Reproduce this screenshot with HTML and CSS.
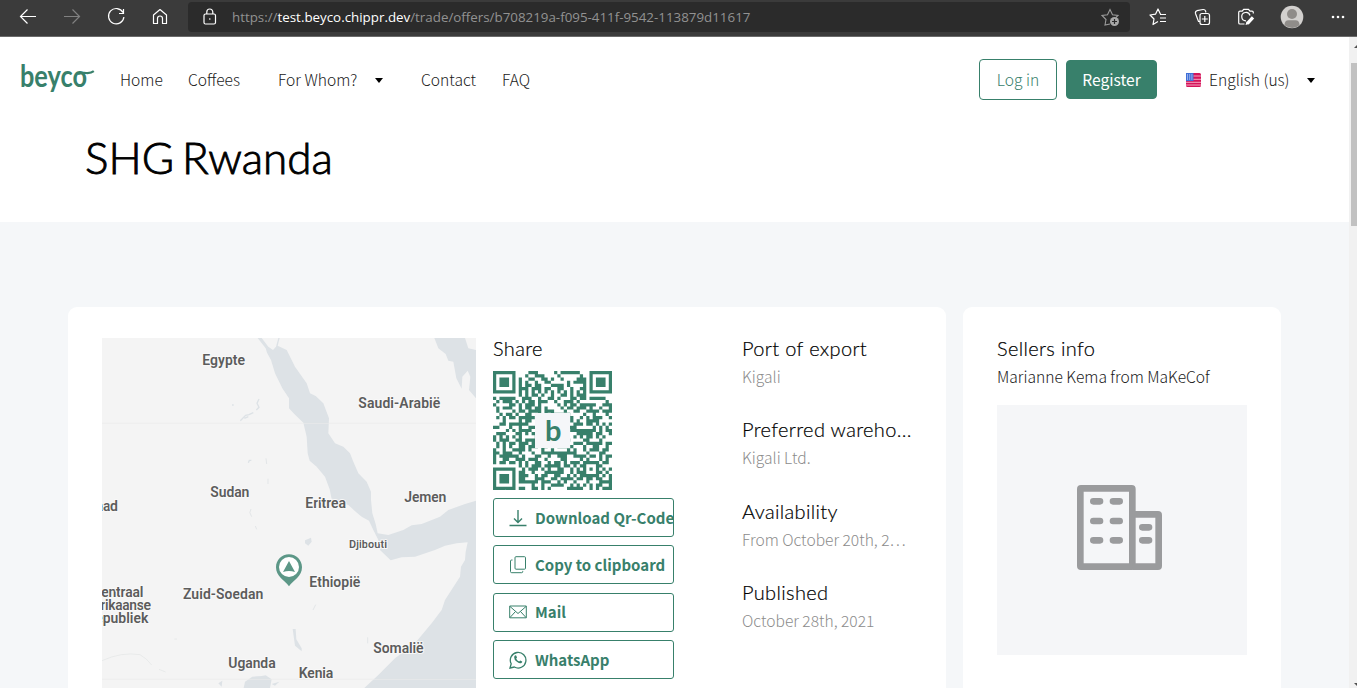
FILE: index.html
```html
<!DOCTYPE html>
<html lang="en">
<head>
<meta charset="utf-8">
<title>SHG Rwanda</title>
<link rel="stylesheet" href="styles.css">
</head>
<body>
<div class="browser">
  <svg class="nav-icons" width="188" height="36" viewBox="0 0 188 36" fill="none" stroke="#fff" stroke-width="1.2">
    <path d="M36 16.500H20.500M27.500 9.500l-7 7 7 7"/>
    <path d="M64 16.500h15.500M72.500 9.500l7 7-7 7" stroke="#818181"/>
    <path d="M123 12.500a7.700 7.700 0 1 0 .9 4.500M123.500 9v4.500H119"/>
    <path d="M153.500 15l6.500-5.500 6.500 5.500v8.500h-4v-5a2.500 2.500 0 0 0-5 0v5h-4z" stroke-linejoin="round"/>
  </svg>
  <div class="address">
    <svg width="14" height="18" viewBox="0 0 14 18" fill="none" stroke="#fff" stroke-width="1.2"><rect x="1" y="6" width="11.500" height="10" rx="1.500"/><path d="M3.800 6V4a3 3 0 0 1 6 0v2"/><circle cx="6.800" cy="11" r=".8" fill="#fff" stroke="none"/></svg>
    <span class="url">https://<b>test.beyco.chippr.dev</b>/trade/offers/b708219a-f095-411f-9542-113879d11617</span>
    <svg class="fav" width="20" height="20" viewBox="0 0 20 20"><path d="M9 17l-5 1 1-5.500-4-4 5.500-.8L9 2.500l2.500 5.200 5.500.8-2 2" fill="none" stroke="#9b9b9b" stroke-width="1.100"/><circle cx="13.500" cy="14.500" r="4.500" fill="#a8a8a8"/><path d="M11 14.500h5M13.500 12v5" stroke="#2b2b2b" stroke-width="1.200"/></svg>
  </div>
  <svg class="tools" width="227" height="36" viewBox="1130 0 227 36" fill="none" stroke="#fff" stroke-width="1.200">
    <path d="M1158 21.500l-5 3 1-5.500-4-4 5.500-.8 2.500-5.200 2.500 5.200M1160 14.500h6M1160 18h6M1160 21.500h6" stroke-linejoin="round"/>
    <path d="M1200 21.500h-1.500l-3-8q-.5-2 1.500-2.800l6-1.200q2-.2 2.700 1.700v1.300"/><rect x="1200" y="13.500" width="9.500" height="11" rx="2"/><path d="M1204.800 16v6M1201.800 19h6"/>
    <path d="M1244.500 24h-4.500q-1.300 0-1.300-1.300V12.500q0-1.300 1.300-1.300h2.200l1.500-1.900h4.800l1.500 1.900h2q1.300 0 1.300 1.300v1M1246 20.800a4.200 4.200 0 1 1 4-5.300"/><path d="M1247.500 23.300l5.500-6" stroke-width="3.200"/><path d="M1245.500 25l1-3.500 2.500 2.500z" fill="#fff" stroke="none"/>
    <g stroke="none"><circle cx="1292" cy="17" r="11.300" fill="#d2d0ce"/><circle cx="1292" cy="14" r="5" fill="#8f8c89"/><path d="M1284.500 25.300q0-5 4-5h7q4 0 4 5-7 5.500-15 0z" fill="#8f8c89"/><g fill="#fff"><circle cx="1333" cy="17" r="1.300"/><circle cx="1338" cy="17" r="1.300"/><circle cx="1343" cy="17" r="1.300"/></g></g>
  </svg>
</div>
<div class="viewport">
  <main class="page">
    <header class="top">
      <nav class="menu">
        <svg class="logo" width="78" height="44" viewBox="0 0 78 44"><text x="0" y="29" textLength="67" lengthAdjust="spacingAndGlyphs">beyco</text><path d="M58 16q4-1.500 8-1 5 .4 7.800-1.800" fill="none" stroke="#38806b" stroke-width="2.200"/></svg>
        <a class="home">Home</a><a class="coffees">Coffees</a><a class="whom">For Whom?</a><i class="caret"></i><a class="contact">Contact</a><a class="faq">FAQ</a>
        <span class="btn login"><span>Log in</span></span><span class="btn register"><span>Register</span></span>
        <svg class="flag" width="15" height="14" viewBox="0 0 15 14"><rect width="15" height="14" rx="1.500" fill="#d4145a"/><path d="M0 3h15M0 6.300h15M0 9.300h15M0 12h15" stroke="#f5a6c0" stroke-width="1"/><rect width="7.500" height="8" fill="#3f6fd8"/><path d="M1 2h6M1 4h6M1 6h6" stroke="#fff" stroke-width=".9" stroke-dasharray="1 1.200"/></svg>
        <a class="lang">English (us)</a><i class="caret"></i>
      </nav>
      <h1>SHG Rwanda</h1>
    </header>
    <div class="cards">
      <section class="card offer">
        <svg class="map" width="374" height="350" viewBox="21 24 1122 1050">
          <rect x="21" y="24" width="1122" height="1050" fill="#f4f4f4"/>
          <g fill="#dde2e6">
            <path d="M488 24L512 55 516 68 528 90 540 130 562 175 582 205 582 235 598 252 625 278 635 320 638 370 644 392 665 410 690 440 704 478 710 508 760 525 782 545 800 560 822 572 835 600 850 630 855 660 887 691 920 682 960 680 1020 660 1050 647 1085 640 1118 637 1112 665 1110 690 1098 710 1095 740 1050 810 1040 840 1010 880 960 940 900 985 850 1035 808 1074H1143V512L1110 522 1060 540 1035 560 980 582 950 586 925 600 880 615 848 610 842 582 832 550 828 510 828 485 815 455 790 430 775 395 765 370 745 350 720 340 700 310 702 265 685 220 662 198 645 190 635 160 600 110 575 60 548 47 554 24H550L543 50 534 60 520 50 500 24Z"/>
            <path d="M1018 24L1030 55 1052 72 1060 92 1075 95 1084 145 1100 176 1102 140 1118 122 1126 140 1122 180 1143 205V60L1120 55 1110 24Z"/>
            <path d="M446 1074L450 1055 472 1040 500 1038 512 1036 530 1048 525 1074ZM593 897H602L604 928 620 955V964L600 947ZM630 631L648 623 650 635 640 647 630 640ZM370 1060L382 1052 380 1070ZM530 1062L553 1055 540 1067Z"/>
          </g>
          <g fill="none" stroke="#dde2e6" stroke-width="4"><path d="M436 272L452 256 462 254 475 248M448 265L460 260M492 207L486 220 492 232 484 240M411 225h5M460 398l3-7h6"/><path d="M513 385l2 17M519 446v16M468 537q-8 10 2 23M481 588l4 10M662 824l-8 16M818 922v18" stroke-width="3" stroke="#e3e6e8"/><path d="M21 992Q80 965 135 974 155 985 170 1005M192 1018l20 8M238 927h8" stroke-width="2" stroke="#e3e5e6"/><path d="M21 280H1143M21 1048H1143" stroke="#ececec" stroke-width="2"/></g>
          <g class="places">
            <text x="322" y="104" textLength="128">Egypte</text><text x="790" y="233" textLength="246">Saudi-Arabië</text><text x="346" y="500" textLength="117">Sudan</text><text x="631" y="533" textLength="122">Eritrea</text><text x="928" y="517" textLength="126">Jemen</text><text x="2" y="544" textLength="67">aad</text><text x="762" y="655" textLength="114" class="small">Djibouti</text><text x="643" y="770" textLength="153">Ethiopië</text><text x="264" y="806" textLength="241">Zuid-Soedan</text><text x="-8" y="800" textLength="153">Centraal</text><text x="-24" y="839" textLength="192">Afrikaanse</text><text x="-26" y="878" textLength="186">Republiek</text><text x="835" y="968" textLength="151">Somalië</text><text x="400" y="1013" textLength="142">Uganda</text><text x="611" y="1045" textLength="104">Kenia</text>
          </g>
          <path d="M582 673C560 673 543 690 543 712 543 740 569 751 582 769 595 751 621 740 621 712 621 690 604 673 582 673Z" fill="#5c9787"/><circle cx="582" cy="711" r="30" fill="#fff"/><path d="M582 693L600 726Q582 720 564 726Z" fill="#5c9787"/>
        </svg>
        <div class="share">
          <h2>Share</h2>
          <svg class="qr" width="119" height="119" viewBox="0 0 119 119"><path id="modules" fill="#38806b" transform="scale(3.2162)"/><rect x="42" y="42" width="35" height="35" fill="#f5f6f9"/><text x="52" y="70">b</text></svg>
          <div class="actions">
            <div class="action"><svg viewBox="0 0 18 18" stroke-width="1.400"><path d="M9 1v12.500M5 9.500l4 4 4-4M.5 16.500h17"/></svg><span>Download Qr-Code</span></div>
            <div class="action"><svg viewBox="0 0 18 18"><rect x="6" y=".7" width="10.500" height="12.500" rx="1"/><path d="M3.500 4H2.700Q1.500 4 1.500 5v10.500q0 1.200 1.200 1.200h10q1 0 1-1v-.8"/></svg><span>Copy to clipboard</span></div>
            <div class="action"><svg viewBox="0 0 18 18"><path d="M.7 3h16.600v11.800H.7zM1 3.500l8 7 8-7M1 14.500l5.500-6M17 14.500l-5.500-6"/></svg><span>Mail</span></div>
            <div class="action"><svg viewBox="0 0 18 18" stroke-width="1.300"><path d="M1 17l1.200-4.200A7.800 7.800 0 1 1 5.300 16z"/><path d="M5.500 5q1.500-1.500 2 .3l.5 1.200-.8 1.200q1 2 3 2.800l1-1 2 1q.3.800-.8 1.500-1.500 1-4.500-1.200T5.200 6.500q0-1 .3-1.500z" fill="#38806b" stroke="none"/></svg><span>WhatsApp</span></div>
          </div>
        </div>
        <dl class="facts">
          <dt>Port of export</dt><dd>Kigali</dd>
          <dt>Preferred wareho...</dt><dd>Kigali Ltd.</dd>
          <dt>Availability</dt><dd>From October 20th, 2…</dd>
          <dt>Published</dt><dd>October 28th, 2021</dd>
        </dl>
      </section>
      <section class="card seller">
        <h2>Sellers info</h2>
        <p>Marianne Kema from MaKeCof</p>
        <div class="photo"><svg width="85" height="85" viewBox="351 555 255 255" fill="none" stroke="#9a9b9d" stroke-width="20"><rect x="361" y="565" width="156" height="235" rx="2"/><path d="M517 643h77q2 0 2 2v153q0 2-2 2h-77"/><path d="M400 604h20M459 604h20M400 663h20M459 663h20M400 721h20M459 721h20M547 682h20M547 721h20" stroke-linecap="round"/></svg></div>
      </section>
    </div>
  </main>
  <div class="scrollbar"><svg width="8" height="26" viewBox="0 0 8 26"><path d="M5 11l4-4v4z" fill="#505050"/></svg><div class="thumb"></div><svg class="down" width="8" height="8" viewBox="0 0 8 8"><path d="M5 3h4v4z" fill="#505050"/></svg></div>
</div>
<script src="qr.js"></script>
</body>
</html>
```
FILE: styles.css
```css
* { box-sizing: border-box; }
body { margin: 0; width: 1357px; height: 688px; overflow: hidden; background: #f5f7f9; color: #202020; font-family: "Noto Sans CJK SC", "Noto Sans", sans-serif; font-weight: 300; font-size: 15.6px; }
svg { display: block; flex: none; }
.browser { height: 37px; display: flex; background: #3b3b3b; border-bottom: 1px solid #6a6a6a; }
.address { width: 942px; height: 30px; margin-top: 2px; padding: 0 9px 0 15px; display: flex; align-items: center; background: #2b2b2b; border-radius: 4px; }
.url { margin-left: 15px; font: 400 13.35px "Open Sans", sans-serif; color: #929292; white-space: nowrap; }
.url b { font-weight: 400; color: #fff; }
.fav { margin-left: auto; }
.viewport { height: 651px; display: flex; }
.page { width: 1349px; overflow: hidden; }
.top { height: 185px; background: #fff; }
.menu { height: 85px; display: flex; align-items: center; padding-left: 20px; white-space: nowrap; }
.menu a, .btn span { padding-bottom: 1px; }
.logo { margin-right: 22px; }
.logo text { font: 700 30px Lato, sans-serif; fill: #38806b; }
.home { width: 68px; }
.coffees { width: 90px; }
.whom { width: 97px; }
.contact { width: 81px; margin-left: 38px; }
.faq { width: 477px; }
.caret { margin-top: 1px; border: 4px solid transparent; border-top: 5px solid #000; border-bottom: 0; }
.btn { height: 41px; border: 1px solid #38806b; border-radius: 4px; display: flex; align-items: center; justify-content: center; color: #38806b; }
.login { width: 78px; margin-right: 9px; }
.register { width: 91px; height: 39px; background: #38806b; color: #fff; font-weight: 400; }
.flag { margin: 0 8px 0 29px; }
.lang { width: 98px; }
h1, h2, dt { font-family: Lato, sans-serif; font-weight: 300; color: #000; margin: 0; }
h1 { margin: 8px 0 0 85px; font-size: 44px; line-height: 54px; word-spacing: -4px; -webkit-text-stroke: .9px #000; }
h2, dt { font-size: 20px; line-height: 24px; letter-spacing: .35px; -webkit-text-stroke: .2px #000; }
.cards { display: flex; gap: 17px; margin: 85px 0 0 68px; }
.card { height: 420px; border-radius: 9px; background: #fff; }
.offer { width: 878px; display: flex; padding: 31px 34px 0; }
.places text { font: 600 42px Roboto, sans-serif; fill: #5c5c5c; stroke: #f8f8f8; stroke-width: 6px; paint-order: stroke; }
.places .small { font-size: 33px; }
.share { flex: none; width: 181px; margin: -2px 0 0 17px; }
.qr { margin-top: 11px; }
.qr text { font: 700 29px Lato, sans-serif; fill: #38806b; }
.actions { display: grid; gap: 8.4px; margin-top: 8px; }
.action { height: 39px; border: 1px solid #38806b; border-radius: 3px; display: flex; align-items: center; padding: 0 0 0 15px; color: #38806b; font-weight: 700; font-size: 15px; white-space: nowrap; overflow: hidden; }
.action span { padding-bottom: 1px; }
.action svg { width: 18px; height: 18px; margin-right: 8px; fill: none; stroke: #38806b; }
.facts { flex: none; width: 180px; margin: -2px 0 0 68px; white-space: nowrap; }
dt { height: 24px; }
dd { margin: 0 0 25.300px; height: 32px; line-height: 33px; color: #8c8c8c; }
.seller { width: 318px; padding: 29px 34px 0; }
.seller p { margin: 0; height: 32px; line-height: 33px; }
.photo { width: 250px; height: 250px; margin-top: 13px; background: #f5f6f8; padding: 80px; }
.scrollbar { width: 8px; background: #f1f1f1; display: flex; flex-direction: column; }
.thumb { height: 163px; margin-left: 2px; background: #c1c1c1; }
.down { margin-top: auto; }
```
FILE: qr.js
```js
// Version 5, error correction level M, mask 2.
const size = 37;
const text = "https://test.beyco.chippr.dev/trade/offers/b708219a-f095-411f-9542-113879d11617";

function dataWords(str) {
  const bits = [];
  const put = (v, n) => { for (let i = n - 1; i >= 0; i--) bits.push((v >> i) & 1); };
  put(4, 4);
  put(str.length, 8);
  for (const c of str) put(c.charCodeAt(0), 8);
  put(0, 4);
  while (bits.length % 8) bits.push(0);
  const words = [];
  for (let i = 0; i < bits.length; i += 8) words.push(parseInt(bits.slice(i, i + 8).join(""), 2));
  for (let pad = 0xec; words.length < 86; pad ^= 0xec ^ 0x11) words.push(pad);
  return words;
}

function mul(a, b) {
  let z = 0;
  for (let i = 7; i >= 0; i--) {
    z = (z << 1) ^ ((z >> 7) * 0x11d);
    z ^= ((b >> i) & 1) * a;
  }
  return z;
}

function checkWords(data, degree) {
  const gen = Array(degree).fill(0);
  gen[degree - 1] = 1;
  let root = 1;
  for (let i = 0; i < degree; i++) {
    for (let j = 0; j < degree; j++) {
      gen[j] = mul(gen[j], root);
      if (j + 1 < degree) gen[j] ^= gen[j + 1];
    }
    root = mul(root, 2);
  }
  const rem = Array(degree).fill(0);
  for (const b of data) {
    const f = b ^ rem.shift();
    rem.push(0);
    gen.forEach((g, i) => { rem[i] ^= mul(g, f); });
  }
  return rem;
}

const grid = Array.from({ length: size }, () => Array(size).fill(null));
const set = (x, y, v) => { if (x >= 0 && y >= 0 && x < size && y < size) grid[y][x] = v ? 1 : 0; };
for (let i = 0; i < size; i++) { set(6, i, i % 2 === 0); set(i, 6, i % 2 === 0); }
for (const [cx, cy] of [[3, 3], [33, 3], [3, 33]])
  for (let dy = -4; dy <= 4; dy++)
    for (let dx = -4; dx <= 4; dx++) {
      const d = Math.max(Math.abs(dx), Math.abs(dy));
      set(cx + dx, cy + dy, d !== 2 && d !== 4);
    }
for (let dy = -2; dy <= 2; dy++)
  for (let dx = -2; dx <= 2; dx++) set(30 + dx, 30 + dy, Math.max(Math.abs(dx), Math.abs(dy)) !== 1);

const format = 0b101111001111100;
const bit = i => (format >> i) & 1;
for (let i = 0; i < 6; i++) set(8, i, bit(i));
set(8, 7, bit(6)); set(8, 8, bit(7)); set(7, 8, bit(8));
for (let i = 9; i < 15; i++) set(14 - i, 8, bit(i));
for (let i = 0; i < 8; i++) set(size - 1 - i, 8, bit(i));
for (let i = 8; i < 15; i++) set(8, size - 15 + i, bit(i));
set(8, size - 8, 1);

const words = dataWords(text);
const blocks = [words.slice(0, 43), words.slice(43)];
const checks = blocks.map(b => checkWords(b, 24));
const stream = [];
for (const pair of [blocks, checks])
  for (let i = 0; i < pair[0].length; i++) stream.push(pair[0][i], pair[1][i]);

let n = 0;
for (let right = size - 1; right >= 1; right -= 2) {
  if (right === 6) right = 5;
  for (let v = 0; v < size; v++)
    for (let j = 0; j < 2; j++) {
      const x = right - j;
      const y = ((right + 1) & 2) === 0 ? size - 1 - v : v;
      if (grid[y][x] !== null) continue;
      const b = n < stream.length * 8 ? (stream[n >> 3] >> (7 - (n & 7))) & 1 : 0;
      n++;
      grid[y][x] = b ^ (x % 3 === 0 ? 1 : 0);
    }
}

let d = "";
grid.forEach((row, y) => row.forEach((v, x) => { if (v) d += `M${x} ${y}h1v1h-1z`; }));
document.getElementById("modules").setAttribute("d", d);
```
